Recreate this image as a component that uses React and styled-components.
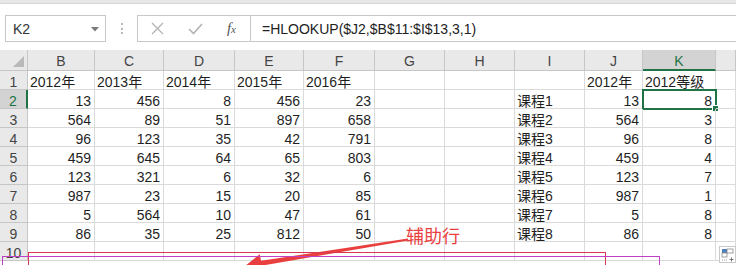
import React from 'react'
import styled, { createGlobalStyle } from 'styled-components'

const columns = ['B', 'C', 'D', 'E', 'F', 'G', 'H', 'I', 'J', 'K', '']
const widths = [67, 69, 71, 69, 71, 70, 70, 70, 58, 73]

const years = ['2012年', '2013年', '2014年', '2015年', '2016年']
const data = [
  [13, 456, 8, 456, 23, 13, 8],
  [564, 89, 51, 897, 658, 564, 3],
  [96, 123, 35, 42, 791, 96, 8],
  [459, 645, 64, 65, 803, 459, 4],
  [123, 321, 6, 32, 6, 123, 7],
  [987, 23, 15, 20, 85, 987, 1],
  [5, 564, 10, 47, 61, 5, 8],
  [86, 35, 25, 812, 50, 86, 8],
]

// each row: 11 cells B..L, { v, num }
const rows = [
  [...years.map((y) => ({ v: y })), {}, {}, {}, { v: '2012年' }, { v: '2012等级' }, {}],
  ...data.map((r, i) => [
    ...r.slice(0, 5).map((n) => ({ v: n, num: true })),
    {}, {},
    { v: '课程' + (i + 1) },
    { v: r[5], num: true },
    { v: r[6], num: true },
    {},
  ]),
  Array(11).fill({}),
]

const App = () => {
  return <Page>
    <GlobalStyle />
    <TopStrip />
    <FormulaBar>
      <NameBox>
        K2
        <svg width='8' height='5' viewBox='0 0 8 5'><path d='M0 0 L8 0 L4 4.5 Z' fill='#7a7a7a' /></svg>
      </NameBox>
      <Dots>
        <span /><span /><span />
      </Dots>
      <FxBox>
        <svg width='13' height='13' viewBox='0 0 13 13'>
          <path d='M1 1 L12 12 M12 1 L1 12' stroke='#b3b3b3' strokeWidth='1.3' />
        </svg>
        <svg width='15' height='12' viewBox='0 0 15 12'>
          <path d='M1 6 L5.5 10.5 L14 1' stroke='#b3b3b3' strokeWidth='1.6' fill='none' />
        </svg>
        <Fx>f<small>x</small></Fx>
      </FxBox>
      <FormulaInput>=HLOOKUP($J2,$B$11:$I$13,3,1)</FormulaInput>
    </FormulaBar>

    <Sheet>
      <Corner>
        <svg width='11' height='11' viewBox='0 0 11 11'><path d='M11 0 L11 11 L0 11 Z' fill='#b9b9b9' /></svg>
      </Corner>
      {columns.map((c) => <ColHeader key={c || 'L'} $active={c === 'K'}>{c}</ColHeader>)}
      {rows.map((row, r) => (
        <React.Fragment key={r}>
          <RowHeader $active={r === 1}>{r + 1}</RowHeader>
          {row.map((cell, c) => (
            <Cell key={c} $num={cell.num} $selected={r === 1 && c === 9}>{cell.v}</Cell>
          ))}
        </React.Fragment>
      ))}
    </Sheet>

    <Label>辅助行</Label>
    <Arrow width='736' height='265' viewBox='0 0 736 265'>
      <polygon
        points='408,238.6 408.3,240.4 265.6,264.9 266.8,271.5 244,266.8 259.8,254.2 261,260.8'
        fill='#ea3f3f'
      />
    </Arrow>
    <Frame $color='#d93650' $top={252} $left={28} $width={578} />
    <Frame $color='#c13fc4' $top={256} $left={2} $width={658} />
    <QuickAnalysis>
      <svg width='17' height='17' viewBox='0 0 17 17'>
        <rect x='0.5' y='0.5' width='16' height='16' fill='#fff' stroke='#c9c9c9' />
        <rect x='3' y='3' width='5' height='4' fill='#4f81bd' />
        <rect x='8' y='3' width='6' height='4' fill='none' stroke='#8a8a8a' strokeWidth='0.8' />
        <rect x='3' y='7' width='5' height='4' fill='none' stroke='#8a8a8a' strokeWidth='0.8' />
        <path d='M3 14 H8' stroke='#8a8a8a' strokeWidth='0.8' strokeDasharray='1 1' />
        <path d='M10.5 13.5 H14.5 M12.5 11.5 V15.5' stroke='#6a6a6a' strokeWidth='0.9' />
      </svg>
    </QuickAnalysis>
  </Page>
}

const GlobalStyle = createGlobalStyle`
  body {
    margin: 0;
    background: #fff;
    font-family: 'Liberation Sans', 'Noto Sans CJK SC', sans-serif;
  }
`

const Page = styled.div`
  position: relative;
  width: 736px;
  height: 265px;
  overflow: hidden;
  background: #fff;
  color: #1f1f1f;
`

const TopStrip = styled.div`
  height: 3px;
  background: #e8e8e8;
  border-bottom: 1px solid #d6d6d6;
`

const FormulaBar = styled.div`
  height: 46px;
  box-sizing: border-box;
  padding: 11px 0 8px 5px;
  display: flex;
  align-items: stretch;
`

const NameBox = styled.div`
  width: 101px;
  box-sizing: border-box;
  border: 1px solid #c8c8c8;
  display: flex;
  align-items: center;
  justify-content: space-between;
  padding: 1px 6px 0 7px;
  font-size: 14px;
  color: #333;
`

const Dots = styled.div`
  width: 31px;
  display: flex;
  flex-direction: column;
  align-items: center;
  justify-content: center;
  gap: 2.5px;
  span {
    width: 2px;
    height: 2px;
    background: #b9b9b9;
  }
`

const FxBox = styled.div`
  width: 113px;
  box-sizing: border-box;
  border: 1px solid #c8c8c8;
  border-right: none;
  display: flex;
  align-items: center;
  justify-content: space-between;
  padding: 0 14px 0 13px;
`

const Fx = styled.span`
  font-family: 'Liberation Serif', serif;
  font-style: italic;
  font-size: 15px;
  color: #555;
  small {
    font-size: 11px;
  }
`

const FormulaInput = styled.div`
  flex: 1;
  border: 1px solid #c8c8c8;
  border-right: none;
  display: flex;
  align-items: center;
  padding: 0 0 0 11px;
  font-size: 14px;
  color: #222;
`

const Sheet = styled.div`
  display: grid;
  grid-template-columns: 28px ${widths.map((w) => w + 'px').join(' ')} 1fr;
  grid-template-rows: 21px repeat(10, 19px);
  font-size: 14px;
`

const Corner = styled.div`
  background: #e9e9e9;
  border-right: 1px solid #c6c6c6;
  border-bottom: 1px solid #c6c6c6;
  display: flex;
  align-items: flex-end;
  justify-content: flex-end;
  padding: 0 3px 3px 0;
  box-sizing: border-box;
`

const ColHeader = styled.div`
  background: ${(p) => (p.$active ? '#d3d3d3' : '#e9e9e9')};
  border-right: 1px solid #c6c6c6;
  border-bottom: ${(p) => (p.$active ? '2px solid #217346' : '1px solid #c6c6c6')};
  box-sizing: border-box;
  display: flex;
  align-items: center;
  justify-content: center;
  padding-top: 2px;
  color: ${(p) => (p.$active ? '#217346' : '#444')};
`

const RowHeader = styled.div`
  background: ${(p) => (p.$active ? '#d3d3d3' : '#e9e9e9')};
  border-right: ${(p) => (p.$active ? '2px solid #217346' : '1px solid #c6c6c6')};
  border-bottom: 1px solid #c6c6c6;
  box-sizing: border-box;
  display: flex;
  align-items: flex-end;
  justify-content: center;
  line-height: 13px;
  color: ${(p) => (p.$active ? '#217346' : '#444')};
`

const Cell = styled.div`
  position: relative;
  border-right: 1px solid #dadada;
  border-bottom: 1px solid #dadada;
  box-sizing: border-box;
  display: flex;
  align-items: flex-end;
  justify-content: ${(p) => (p.$num ? 'flex-end' : 'flex-start')};
  padding: 0 3px 0 2px;
  line-height: 13px;
  white-space: nowrap;
  ${(p) => p.$selected && `
    outline: 2px solid #217346;
    outline-offset: -1px;
    &::after {
      content: '';
      position: absolute;
      right: -4px;
      bottom: -4px;
      width: 5px;
      height: 5px;
      background: #217346;
      border: 1px solid #fff;
    }
  `}
`

const Label = styled.div`
  position: absolute;
  left: 406px;
  top: 224px;
  font-size: 18px;
  color: #ea3f3f;
  font-family: 'Noto Sans CJK SC', sans-serif;
  line-height: 22px;
`

const Arrow = styled.svg`
  position: absolute;
  left: 0;
  top: 0;
  pointer-events: none;
`

const Frame = styled.div`
  position: absolute;
  top: ${(p) => p.$top}px;
  left: ${(p) => p.$left}px;
  width: ${(p) => p.$width}px;
  height: 40px;
  box-sizing: border-box;
  border: 1.5px solid ${(p) => p.$color};
`

const QuickAnalysis = styled.div`
  position: absolute;
  left: 719px;
  top: 246px;
  width: 17px;
  height: 17px;
  display: flex;
`

export default App
